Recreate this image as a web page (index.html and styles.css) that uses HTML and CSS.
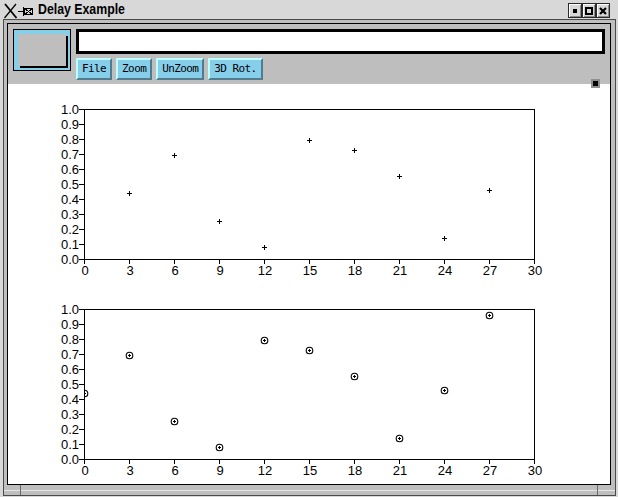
FILE: index.html
```html
<!DOCTYPE html>
<html>
<head>
<meta charset="utf-8">
<title>Delay Example</title>
<link rel="stylesheet" href="styles.css">
</head>
<body>
<div class="wm">
  <div class="titlebar">
    <svg class="wm-logo" width="34" height="17" viewBox="0 0 34 17">
      <g stroke="#000" fill="none">
        <path d="M2 2 L13.5 16" stroke-width="1.8"/>
        <path d="M13 2 L1.5 16" stroke-width="1.2"/>
        <path d="M15 9.5 H20" stroke-width="1" shape-rendering="crispEdges"/>
        <path d="M20.5 5 V14 M21.5 6.5 H29.5 V12.5 H21.5 Z M22 7 L29 12 M22 12 L29 7" stroke-width="1" shape-rendering="crispEdges"/>
      </g>
    </svg>
    <span class="title">Delay Example</span>
    <div class="wm-buttons">
      <span class="wm-btn"><span class="ico-min"></span></span>
      <span class="wm-btn"><span class="ico-max"></span></span>
      <span class="wm-btn">
        <svg width="8" height="8" viewBox="0 0 8 8"><path d="M1 1 L7 7 M7 1 L1 7" stroke="#000" stroke-width="2.2"/></svg>
      </span>
    </div>
  </div>
  <div class="frame">
    <div class="client">
      <div class="toolbar">
        <div class="swatch"><div class="swatch-in"></div></div>
        <div class="controls">
          <div class="entry"></div>
          <div class="buttons">
            <span class="btn">File</span>
            <span class="btn">Zoom</span>
            <span class="btn">UnZoom</span>
            <span class="btn">3D Rot.</span>
          </div>
        </div>
        <span class="grip"></span>
      </div>
      <div class="plots">
        <svg class="plot" width="602" height="200" viewBox="0 0 602 200">
          <g stroke="#000" stroke-width="1" fill="none" shape-rendering="crispEdges">
            <path d="M76 25.5H527M526.5 25V176M76 175.5H527M76.5 25V176"/>
            <path d="M71 175.5H76M71 160.5H76M71 145.5H76M71 130.5H76M71 115.5H76M71 100.5H76M71 85.5H76M71 70.5H76M71 55.5H76M71 40.5H76M71 25.5H76"/>
            <path d="M76.5 176V180M121.5 176V180M166.5 176V180M211.5 176V180M256.5 176V180M301.5 176V180M346.5 176V180M391.5 176V180M436.5 176V180M481.5 176V180M526.5 176V180"/>
            <path d="M119 109.5H124M121.5 107V112 M164 71.5H169M166.5 69V74 M209 137.5H214M211.5 135V140 M254 163.5H259M256.5 161V166 M299 56.5H304M301.5 54V59 M344 66.5H349M346.5 64V69 M389 92.5H394M391.5 90V95 M434 154.5H439M436.5 152V157 M479 106.5H484M481.5 104V109"/>
          </g>
          <g class="ylabels" text-anchor="end">
            <text x="71" y="180">0.0</text>
            <text x="71" y="165">0.1</text>
            <text x="71" y="150">0.2</text>
            <text x="71" y="135">0.3</text>
            <text x="71" y="120">0.4</text>
            <text x="71" y="105">0.5</text>
            <text x="71" y="90">0.6</text>
            <text x="71" y="75">0.7</text>
            <text x="71" y="60">0.8</text>
            <text x="71" y="45">0.9</text>
            <text x="71" y="30">1.0</text>
          </g>
          <g class="xlabels" text-anchor="middle">
            <text x="77" y="191">0</text>
            <text x="122" y="191">3</text>
            <text x="167" y="191">6</text>
            <text x="212" y="191">9</text>
            <text x="257" y="191">12</text>
            <text x="302" y="191">15</text>
            <text x="347" y="191">18</text>
            <text x="392" y="191">21</text>
            <text x="437" y="191">24</text>
            <text x="482" y="191">27</text>
            <text x="527" y="191">30</text>
          </g>
        </svg>
        <svg class="plot" width="602" height="200" viewBox="0 0 602 200">
          <defs>
            <clipPath id="area2"><rect x="76" y="25" width="451" height="151"/></clipPath>
          </defs>
          <g stroke="#000" stroke-width="1" fill="none" shape-rendering="crispEdges">
            <path d="M76 25.5H527M526.5 25V176M76 175.5H527M76.5 25V176"/>
            <path d="M71 175.5H76M71 160.5H76M71 145.5H76M71 130.5H76M71 115.5H76M71 100.5H76M71 85.5H76M71 70.5H76M71 55.5H76M71 40.5H76M71 25.5H76"/>
            <path d="M76.5 176V180M121.5 176V180M166.5 176V180M211.5 176V180M256.5 176V180M301.5 176V180M346.5 176V180M391.5 176V180M436.5 176V180M481.5 176V180M526.5 176V180"/>
          </g>
          <g clip-path="url(#area2)" stroke="#000" stroke-width="1.1" fill="none">
            <circle cx="76.5" cy="109.5" r="3.3"/>
            <circle cx="121.5" cy="71.5" r="3.3"/>
            <circle cx="166.5" cy="137.5" r="3.3"/>
            <circle cx="211.5" cy="163.5" r="3.3"/>
            <circle cx="256.5" cy="56.5" r="3.3"/>
            <circle cx="301.5" cy="66.5" r="3.3"/>
            <circle cx="346.5" cy="92.5" r="3.3"/>
            <circle cx="391.5" cy="154.5" r="3.3"/>
            <circle cx="436.5" cy="106.5" r="3.3"/>
            <circle cx="481.5" cy="31.5" r="3.3"/>
          </g>
          <g clip-path="url(#area2)" stroke="#000" stroke-width="1" fill="none" shape-rendering="crispEdges">
            <path d="M76.5 108V111M75 109.5H78 M121.5 70V73M120 71.5H123 M166.5 136V139M165 137.5H168 M211.5 162V165M210 163.5H213 M256.5 55V58M255 56.5H258 M301.5 65V68M300 66.5H303 M346.5 91V94M345 92.5H348 M391.5 153V156M390 154.5H393 M436.5 105V108M435 106.5H438 M481.5 30V33M480 31.5H483"/>
          </g>
          <g class="ylabels" text-anchor="end">
            <text x="71" y="180">0.0</text>
            <text x="71" y="165">0.1</text>
            <text x="71" y="150">0.2</text>
            <text x="71" y="135">0.3</text>
            <text x="71" y="120">0.4</text>
            <text x="71" y="105">0.5</text>
            <text x="71" y="90">0.6</text>
            <text x="71" y="75">0.7</text>
            <text x="71" y="60">0.8</text>
            <text x="71" y="45">0.9</text>
            <text x="71" y="30">1.0</text>
          </g>
          <g class="xlabels" text-anchor="middle">
            <text x="77" y="191">0</text>
            <text x="122" y="191">3</text>
            <text x="167" y="191">6</text>
            <text x="212" y="191">9</text>
            <text x="257" y="191">12</text>
            <text x="302" y="191">15</text>
            <text x="347" y="191">18</text>
            <text x="392" y="191">21</text>
            <text x="437" y="191">24</text>
            <text x="482" y="191">27</text>
            <text x="527" y="191">30</text>
          </g>
        </svg>
      </div>
    </div>
    <div class="handles"><span class="h-left"></span><span class="h-mid"></span><span class="h-right"></span></div>
  </div>
</div>
</body>
</html>
```
FILE: styles.css
```css
* { box-sizing: border-box; }
html, body { margin: 0; padding: 0; }
body {
  width: 618px;
  height: 497px;
  overflow: hidden;
  background: #d6d6d6;
  font-family: "Liberation Sans", Arial, sans-serif;
}
.wm {
  width: 618px;
  height: 497px;
  background: #d8d8d8;
  display: flex;
  flex-direction: column;
}
.titlebar {
  height: 19px;
  flex: none;
  display: flex;
  align-items: flex-start;
}
.wm-logo { margin: 2px 0 0 3px; flex: none; display: block; }
.title {
  font-weight: bold;
  font-size: 14px;
  line-height: 19px;
  color: #000;
  white-space: nowrap;
  transform: scaleX(0.88);
  transform-origin: 0 50%;
  margin-left: 1px;
}
.wm-buttons { margin: 3px 8px 0 auto; display: flex; }
.wm-btn {
  width: 14px;
  height: 15px;
  border: 1px solid #2a2a2a;
  background: #d8d8d8;
  box-shadow: inset 1px 1px 0 #fff, inset -1px -1px 0 #8a8a8a;
  display: flex;
  align-items: center;
  justify-content: center;
}
.wm-btn svg { display: block; }
.ico-min { width: 4px; height: 4px; background: #000; }
.ico-max { width: 8px; height: 8px; border: 2px solid #000; }
.frame {
  flex: 1;
  margin: 0 2px 1px 3px;
  border: 1px solid #4a4a4a;
  background: #bebebe;
  padding: 3px 4px 0 3px;
  display: flex;
  flex-direction: column;
}
.client {
  border: 1px solid #000;
  background: #fff;
  position: relative;
  display: flex;
  flex-direction: column;
}
.toolbar {
  height: 60px;
  flex: none;
  background: #bebebe;
  display: flex;
  padding: 5px 5px 0 5px;
  gap: 5px;
}
.swatch {
  width: 58px;
  height: 42px;
  flex: none;
  border: 1px solid #000;
  background: #87ceeb;
  padding: 4px;
}
.swatch-in {
  width: 48px;
  height: 32px;
  background: #bebebe;
  box-shadow: 2px 2px 0 #000;
}
.controls {
  flex: 1;
  display: flex;
  flex-direction: column;
  gap: 4px;
}
.entry {
  height: 25px;
  border: 3px solid #000;
  background: #fff;
}
.buttons { display: flex; gap: 4px; }
.btn {
  height: 22px;
  padding: 0 4px;
  border: 2px solid;
  border-color: #bdffff #517c8d #517c8d #bdffff;
  background: #87ceeb;
  color: #000;
  font-family: "DejaVu Sans Mono", "Liberation Mono", monospace;
  font-size: 11px;
  letter-spacing: -0.6px;
  line-height: 18px;
  white-space: pre;
}
.grip {
  position: absolute;
  left: 583px;
  top: 55px;
  width: 9px;
  height: 9px;
  background: #000;
  border: 2px solid #8e8e8e;
}
.plots { height: 400px; background: #fff; }
.plot { display: block; }
.plot text {
  font-family: "Liberation Sans", Arial, sans-serif;
  font-size: 13px;
  fill: #000;
}
.handles {
  height: 10px;
  flex: none;
  display: flex;
  margin: 0 -4px 0 -3px;
  background: linear-gradient(#bebebe 5px, #e6e6e6 5px, #e6e6e6 6px, #bebebe 6px);
}
.h-left { width: 17px; border-right: 1px solid #6a6a6a; }
.h-mid { flex: 1; border-right: 1px solid #6a6a6a; }
.h-right { width: 17px; }
```
